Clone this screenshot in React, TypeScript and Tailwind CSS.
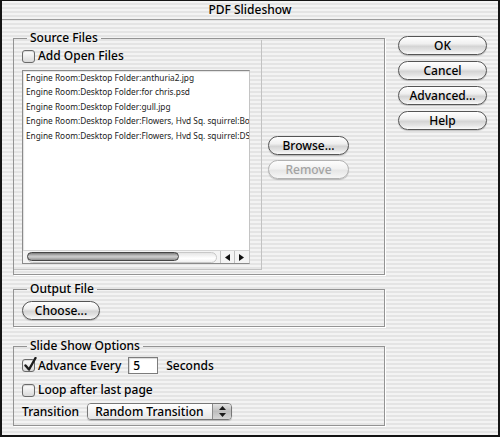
import React from 'react';

const stripes =
  'bg-[repeating-linear-gradient(180deg,#f3f3f3_0px,#f3f3f3_2px,#e4e4e4_2px,#e4e4e4_4px)]';

const files = [
  'Engine Room:Desktop Folder:anthuria2.jpg',
  'Engine Room:Desktop Folder:for chris.psd',
  'Engine Room:Desktop Folder:gull.jpg',
  'Engine Room:Desktop Folder:Flowers, Hvd Sq. squirrel:Bo',
  'Engine Room:Desktop Folder:Flowers, Hvd Sq. squirrel:DS',
];

const AquaButton = ({ label, width, disabled }: { label: string; width: string; disabled?: boolean }) => (
  <div
    className={`${width} h-[19px] rounded-full border flex items-center justify-center text-[12px] leading-none shadow-[0_1px_1px_rgba(0,0,0,0.2)] ${
      disabled
        ? 'border-[#b2b2b2] text-[#a3a3a3] bg-[linear-gradient(180deg,#fdfdfd_0%,#f1f1f1_45%,#e6e6e6_55%,#f6f6f6_100%)]'
        : 'border-[#555555] text-black bg-[linear-gradient(180deg,#ffffff_0%,#efefef_40%,#d4d4d4_55%,#e4e4e4_78%,#fafafa_100%)]'
    }`}
  >
    {label}
  </div>
);

const Checkbox = ({ checked }: { checked?: boolean }) => (
  <span className="relative w-[13px] h-[13px] shrink-0 rounded-[3px] border border-[#6a6a6a] bg-[linear-gradient(180deg,#ffffff_0%,#ececec_50%,#d9d9d9_100%)] shadow-[inset_0_1px_1px_rgba(0,0,0,0.15)]">
    {checked && (
      <svg className="absolute -top-[3px] left-[1px]" width="13" height="15" viewBox="0 0 13 15">
        <path d="M1.5 8.5 L5 12.5 L11.5 1" fill="none" stroke="#1c1c1c" strokeWidth="2.4" strokeLinecap="round" strokeLinejoin="round" />
      </svg>
    )}
  </span>
);

const Group = ({ title, children, className }: { title: string; children: React.ReactNode; className?: string }) => (
  <fieldset className={`border border-[#939393] shadow-[1px_1px_0_#ffffff] ${className ?? ''}`}>
    <legend className="ml-[13px] px-[3px] text-[12px] leading-[16px] text-black">{title}</legend>
    {children}
  </fieldset>
);

export default function App() {
  return (
    <div className={`w-[500px] h-[437px] flex flex-col border-x-2 border-t border-b-2 border-[#141414] font-['Noto_Sans',sans-serif] font-medium text-black ${stripes}`}>
      {/* title bar */}
      <div className="h-[19px] shrink-0 flex items-center justify-center border-b border-[#9c9c9c] text-[12px] leading-none">
        PDF Slideshow
      </div>

      <div className="flex pl-[11px]">
        {/* left column */}
        <div className="w-[372px] flex flex-col">
          <Group title="Source Files" className="mt-[10px]">
            <div className="flex pb-[4px]">
              <div className="w-[248px] -mt-[6px] pl-[8px] pt-[8px] pb-[5px] border-r border-b border-[#c2c2c2]">
                <label className="h-[16px] flex items-center gap-[3px] text-[12px]">
                  <Checkbox />
                  <span>Add Open Files</span>
                </label>
                <div className="mt-[6px] w-[228px] h-[194px] flex flex-col bg-white border border-[#8a8a8a] border-r-[#c4c4c4] shadow-[inset_1px_1px_1px_rgba(0,0,0,0.12)]">
                  <div className="flex-1 overflow-hidden pl-[3px] text-[8.3px] font-normal leading-[14.4px] text-[#222]">
                    {files.map((f) => (
                      <div key={f} className="whitespace-nowrap">{f}</div>
                    ))}
                  </div>
                  <div className="h-[13px] flex items-center bg-[#f4f4f4] border-t border-[#d4d4d4]">
                    <div className="ml-[4px] w-[190px] h-[11px] flex rounded-full bg-[linear-gradient(180deg,#e6e6e6,#ffffff_60%,#f0f0f0)] border border-[#c8c8c8]">
                      <div className="w-[152px] h-full rounded-full border border-[#454545] -m-px bg-[linear-gradient(180deg,#7c7c7c_0%,#b9b9b9_35%,#cfcfcf_55%,#8f8f8f_100%)]" />
                    </div>
                    <div className="ml-[3px] w-[14px] h-full flex items-center justify-center border-l border-[#c0c0c0]">
                      <svg width="5" height="7" viewBox="0 0 5 7"><path d="M5 0 L0 3.5 L5 7 Z" fill="#111" /></svg>
                    </div>
                    <div className="w-[14px] h-full flex items-center justify-center border-l border-[#c0c0c0]">
                      <svg width="5" height="7" viewBox="0 0 5 7"><path d="M0 0 L5 3.5 L0 7 Z" fill="#111" /></svg>
                    </div>
                  </div>
                </div>
              </div>
              <div className="ml-[6px] mt-[90px] flex flex-col gap-[5px]">
                <AquaButton label="Browse..." width="w-[81px]" />
                <AquaButton label="Remove" width="w-[81px]" disabled />
              </div>
            </div>
          </Group>

          <Group title="Output File" className="mt-[6px]">
            <div className="pl-[8px] pt-[4px] pb-[6px]">
              <AquaButton label="Choose..." width="w-[78px]" />
            </div>
          </Group>

          <Group title="Slide Show Options" className="mt-[11px]">
            <div className="pl-[8px] pt-[3px] pb-[5px] flex flex-col text-[12px]">
              <div className="h-[17px] flex items-center">
                <Checkbox checked />
                <span className="ml-[3px]">Advance Every</span>
                <div className="ml-[7px] w-[30px] h-[17px] flex items-center pl-[4px] bg-white border border-[#7c7c7c] shadow-[inset_1px_1px_1px_rgba(0,0,0,0.15)]">
                  5
                </div>
                <span className="ml-[8px]">Seconds</span>
              </div>
              <div className="mt-[8px] h-[16px] flex items-center">
                <Checkbox />
                <span className="ml-[3px]">Loop after last page</span>
              </div>
              <div className="mt-[5px] h-[17px] flex items-center">
                <span>Transition</span>
                <div className="ml-[8px] w-[145px] h-[17px] flex rounded-[4px] border border-[#777777] overflow-hidden shadow-[0_1px_1px_rgba(0,0,0,0.2)]">
                  <div className="flex-1 flex items-center pl-[7px] bg-[linear-gradient(180deg,#ffffff_0%,#f3f3f3_50%,#e4e4e4_100%)]">
                    Random Transition
                  </div>
                  <div className="w-[19px] flex items-center justify-center border-l border-[#8a8a8a] bg-[linear-gradient(180deg,#e4e4e4_0%,#bdbdbd_50%,#d6d6d6_100%)]">
                    <svg width="7" height="11" viewBox="0 0 7 11">
                      <path d="M3.5 0 L7 4 L0 4 Z" fill="#1a1a1a" />
                      <path d="M0 7 L7 7 L3.5 11 Z" fill="#1a1a1a" />
                    </svg>
                  </div>
                </div>
              </div>
            </div>
          </Group>
        </div>

        {/* right column */}
        <div className="ml-[13px] mt-[16px] flex flex-col gap-[6px]">
          <AquaButton label="OK" width="w-[89px]" />
          <AquaButton label="Cancel" width="w-[89px]" />
          <AquaButton label="Advanced..." width="w-[89px]" />
          <AquaButton label="Help" width="w-[89px]" />
        </div>
      </div>
    </div>
  );
}
